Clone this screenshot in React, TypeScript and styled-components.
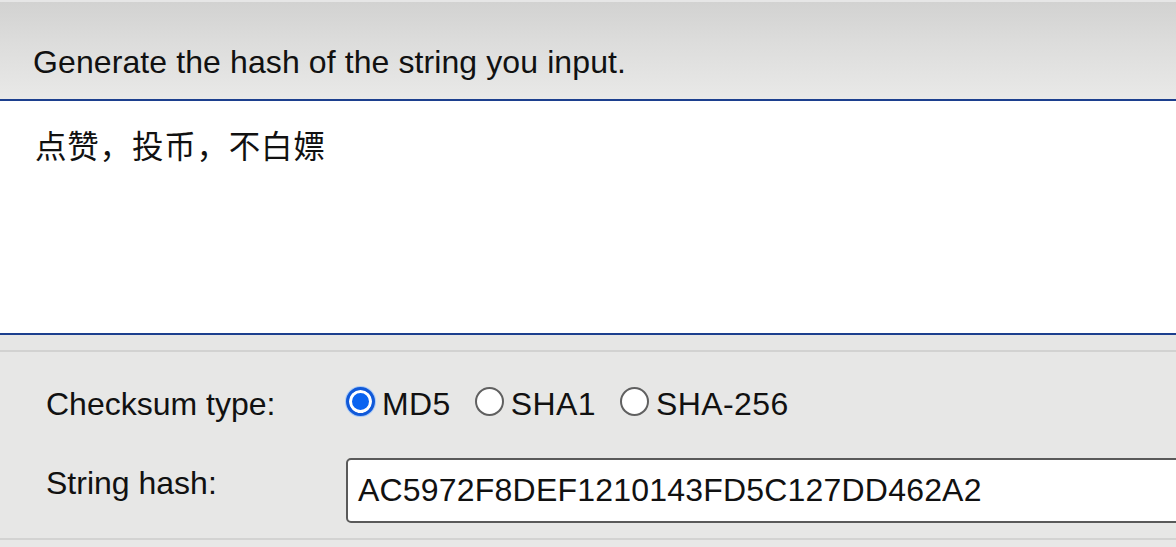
import * as React from 'react'
import styled, { createGlobalStyle } from 'styled-components'

const GlobalStyle = createGlobalStyle`
  html, body {
    margin: 0;
    padding: 0;
    background: #e7e7e6;
    overflow: hidden;
  }
  body {
    font-family: "Liberation Sans", Arial, "Noto Sans CJK SC", sans-serif;
    color: #111;
  }
`

const Page = styled.div`
  width: 1176px;
  height: 547px;
  overflow: hidden;
  display: flex;
  flex-direction: column;
`

const Header = styled.div`
  height: 101px;
  flex-shrink: 0;
  box-sizing: border-box;
  padding: 42px 0 0 33px;
  border-top: 2px solid #e6e6e6;
  border-bottom: 2px solid #1c3f8e;
  background: linear-gradient(to bottom, #d2d2d1 0%, #dcdcdb 40%, #e9e9e8 100%);
`

const Title = styled.h1`
  margin: 0;
  font-size: 32px;
  font-weight: 400;
  line-height: 36px;
  letter-spacing: 0.1px;
`

const InputArea = styled.div`
  height: 234px;
  flex-shrink: 0;
  box-sizing: border-box;
  background: #ffffff;
  border-bottom: 2px solid #1c3f8e;
  padding: 23px 0 0 35px;
  font-family: "Noto Sans CJK SC", "Liberation Sans", sans-serif;
  font-size: 31.5px;
  line-height: 40px;
  letter-spacing: 0.8px;
`

const Gap = styled.div`
  height: 15px;
  flex-shrink: 0;
  background: #e6e6e5;
  border-bottom: 2px solid #d2d2d1;
`

const Form = styled.div`
  height: 188px;
  flex-shrink: 0;
  box-sizing: border-box;
  background: #e7e7e6;
  border-bottom: 2px solid #d3d3d2;
  display: grid;
  grid-template-columns: 300px 1fr;
  grid-template-rows: 104px 1fr;
  padding-left: 46px;
`

const Label = styled.div<{ $pad: number }>`
  font-size: 32px;
  line-height: 36px;
  padding-top: ${p => p.$pad}px;
`

const Radios = styled.div`
  display: flex;
  align-items: flex-start;
  padding-top: 34px;
  align-self: start;
`

const RadioItem = styled.label`
  display: flex;
  align-items: flex-start;
  font-size: 32px;
  line-height: 36px;
  letter-spacing: 0.4px;
  margin-right: 24px;
`

const Dot = styled.span<{ $on?: boolean }>`
  width: 29px;
  height: 29px;
  margin-top: 1px;
  flex-shrink: 0;
  box-sizing: border-box;
  border-radius: 50%;
  margin-right: 7px;
  background: ${p => (p.$on ? '#0a63f0' : '#ffffff')};
  border: ${p => (p.$on ? '3px solid #1159d8' : '2px solid #606060')};
  box-shadow: ${p => (p.$on ? 'inset 0 0 0 3px #ffffff, 0 0 0 1px #a9cbf7' : 'none')};
`

const HashBox = styled.div`
  align-self: start;
  margin-top: 2px;
  width: 900px;
  height: 65px;
  box-sizing: border-box;
  border: 2px solid #5a5a5a;
  border-radius: 5px;
  background: #ffffff;
  padding-left: 10px;
  display: flex;
  align-items: center;
  font-size: 32px;
  letter-spacing: 0.2px;
`

const Bottom = styled.div`
  flex: 1;
  background: #e8e8e7;
`

export default function App() {
  return (
    <Page>
      <GlobalStyle />
      <Header>
        <Title>Generate the hash of the string you input.</Title>
      </Header>
      <InputArea>点赞，投币，不白嫖</InputArea>
      <Gap />
      <Form>
        <Label $pad={34}>Checksum type:</Label>
        <Radios>
          <RadioItem><Dot $on />MD5</RadioItem>
          <RadioItem><Dot />SHA1</RadioItem>
          <RadioItem><Dot />SHA-256</RadioItem>
        </Radios>
        <Label $pad={9}>String hash:</Label>
        <HashBox>AC5972F8DEF1210143FD5C127DD462A2</HashBox>
      </Form>
      <Bottom />
    </Page>
  )
}
